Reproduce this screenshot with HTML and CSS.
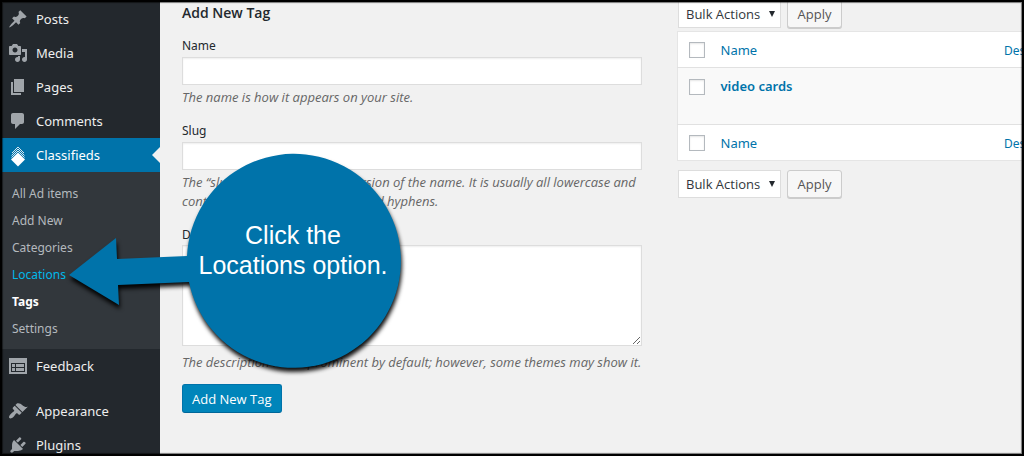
FILE: index.html
```html
<!DOCTYPE html>
<html lang="en">
<head>
<meta charset="utf-8">
<title>Tags</title>
<link rel="stylesheet" href="styles.css">
</head>
<body>
<div class="app">
  <nav class="sidebar" aria-label="Main menu">
    <ul class="menu">
      <li><a class="item" href="#"><svg class="icon" viewBox="0 0 20 20" aria-hidden="true"><path d="M10.44 3.02l1.82-1.82 6.36 6.35-1.83 1.82c-1.05-.68-2.48-.57-3.41.36l-.75.75c-.92.93-1.04 2.35-.35 3.41l-1.83 1.82-2.41-2.41-2.8 2.79c-.42.42-3.38 2.71-3.8 2.29s1.86-3.39 2.28-3.81l2.79-2.79L4.1 9.36l1.83-1.82c1.05.69 2.48.57 3.4-.36l.75-.75c.93-.92 1.05-2.35.36-3.41z"/></svg>Posts</a></li>
      <li><a class="item" href="#"><svg class="icon" viewBox="0 0 20 20" aria-hidden="true"><path d="M13 11V4c0-.55-.45-1-1-1h-1.67L9 1H5L3.67 3H2c-.55 0-1 .45-1 1v7c0 .55.45 1 1 1h10c.55 0 1-.45 1-1zM7 4.5c1.38 0 2.5 1.12 2.5 2.5S8.38 9.5 7 9.5 4.5 8.38 4.5 7 5.62 4.5 7 4.5zM14 6h5v10.5c0 1.38-1.12 2.5-2.5 2.5S14 17.88 14 16.5s1.12-2.5 2.5-2.5c.17 0 .34.02.5.05V9h-3V6zm-4 8.05V13h2v3.5c0 1.38-1.12 2.5-2.5 2.5S7 17.88 7 16.5 8.12 14 9.5 14c.17 0 .34.02.5.05z"/></svg>Media</a></li>
      <li><a class="item" href="#"><svg class="icon" viewBox="0 0 20 20" aria-hidden="true"><path d="M6 15V2h10v13H6zm-1 1h8v2H3V5h2v11z"/></svg>Pages</a></li>
      <li><a class="item" href="#"><svg class="icon" viewBox="0 0 20 20" aria-hidden="true"><path d="M5 2h9c1.1 0 2 .9 2 2v7c0 1.1-.9 2-2 2h-2l-5 5v-5H5c-1.1 0-2-.9-2-2V4c0-1.1.9-2 2-2z"/></svg>Comments</a></li>
      <li>
        <a class="item current" href="#"><svg class="icon" viewBox="0 0 20 20" aria-hidden="true"><path d="M10 7.500l7 7-7 7-7-7z"/><path class="outline" d="M3.500 12.500L10 6l6.500 6.500M3.500 10.500L10 4l6.500 6.500M4 8l6-6 6 6"/></svg>Classifieds</a>
        <ul class="submenu">
          <li><a href="#">All Ad items</a></li>
          <li><a href="#">Add New</a></li>
          <li><a href="#">Categories</a></li>
          <li><a class="hovered" href="#">Locations</a></li>
          <li><a class="active" href="#">Tags</a></li>
          <li><a href="#">Settings</a></li>
        </ul>
      </li>
      <li><a class="item" href="#"><svg class="icon" viewBox="0 0 20 20" aria-hidden="true"><path fill-rule="evenodd" d="M1 2h18v16H1zM3 7v9h14V7zM4 8h3v3H4zM8 8h8v3H8zM4 12h3v3H4zM8 12h8v3H8z"/></svg>Feedback</a></li>
      <li class="separated"><a class="item" href="#"><svg class="icon" viewBox="0 0 20 20" aria-hidden="true"><path d="M14.48 11.06L7.41 3.99l1.5-1.5c.5-.56 2.3-.47 3.51.32 1.21.8 1.43 1.28 2.91 2.1 1.18.64 2.45 1.26 4.45.85zm-.71.71L6.7 4.7 4.93 6.47c-.39.39-.39 1.02 0 1.41l1.06 1.06c.39.39.39 1.03 0 1.42-.6.6-1.43 1.11-2.21 1.69-.35.26-.7.53-1.01.84C1.43 14.23.4 16.08 1.4 17.07c.99 1 2.84-.03 4.18-1.36.31-.31.58-.66.85-1.02.57-.78 1.08-1.61 1.69-2.21.39-.39 1.02-.39 1.41 0l1.06 1.06c.39.39 1.02.39 1.41 0z"/></svg>Appearance</a></li>
      <li><a class="item" href="#"><svg class="icon" viewBox="0 0 20 20" aria-hidden="true"><path d="M13.11 4.36L9.87 7.6 8 5.73l3.24-3.24c.35-.34 1.05-.2 1.56.32.52.51.66 1.21.31 1.55zm-8 1.77l.91-1.12 9.01 9.01-1.19.84c-.71.71-2.63 1.16-3.82 1.16H6.14L4.9 17.26c-.59.59-1.54.59-2.12 0-.59-.58-.59-1.53 0-2.12l1.24-1.24v-3.88c0-1.13.4-3.19 1.09-3.89zm7.26 3.97l3.24-3.24c.34-.35 1.04-.21 1.55.31.52.51.66 1.21.31 1.55l-3.24 3.25z"/></svg>Plugins</a></li>
    </ul>
  </nav>

  <main class="content">
    <form class="tag-form">
      <h2 class="title">Add New Tag</h2>
      <div class="field">
        <label for="tag-name">Name</label>
        <input class="text" id="tag-name" type="text">
        <p>The name is how it appears on your site.</p>
      </div>
      <div class="field">
        <label for="tag-slug">Slug</label>
        <input class="text" id="tag-slug" type="text">
        <p>The “slug” is the URL-friendly version of the name. It is usually all lowercase and contains only letters, numbers, and hyphens.</p>
      </div>
      <div class="field">
        <label for="tag-description">Description</label>
        <textarea class="text area" id="tag-description"></textarea>
        <p>The description is not prominent by default; however, some themes may show it.</p>
      </div>
      <button class="primary" type="button">Add New Tag</button>
    </form>

    <section class="list">
      <div class="bulk">
        <span class="picker"><select aria-label="Bulk action, top"><option>Bulk Actions</option></select><svg class="caret" viewBox="0 0 6 6" aria-hidden="true"><path d="M0 0h6L3 6z"/></svg></span>
        <button class="secondary" type="button">Apply</button>
      </div>
      <table class="tags">
        <thead>
          <tr><td class="check"><input type="checkbox" aria-label="Select all"></td><th><a href="#">Name</a></th><th class="desc"><a href="#">Description</a></th></tr>
        </thead>
        <tbody>
          <tr><td class="check"><input type="checkbox" aria-label="Select video cards"></td><td><a class="row-title" href="#">video cards</a></td><td></td></tr>
        </tbody>
        <tfoot>
          <tr><td class="check"><input type="checkbox" aria-label="Select all, bottom"></td><th><a href="#">Name</a></th><th class="desc"><a href="#">Description</a></th></tr>
        </tfoot>
      </table>
      <div class="bulk">
        <span class="picker"><select aria-label="Bulk action, bottom"><option>Bulk Actions</option></select><svg class="caret" viewBox="0 0 6 6" aria-hidden="true"><path d="M0 0h6L3 6z"/></svg></span>
        <button class="secondary" type="button">Apply</button>
      </div>
    </section>
  </main>

  <aside class="callout">
    <svg class="bubble" viewBox="0 0 340 240" aria-hidden="true"><path d="M4 135L51 98l1 21 70-3a107 107 0 1 1 2 26l-71 3 1 20z"/></svg>
    <p class="callout-text">Click the<br>Locations option.</p>
  </aside>
  <div class="frame"></div>
</div>
</body>
</html>
```
FILE: styles.css
```css
* { box-sizing: border-box; }
body {
  margin: 0;
  background: #f1f1f1;
  color: #23282d;
  font: 13px/19px "Noto Sans", "Open Sans", sans-serif;
}
a { color: #0073aa; text-decoration: none; }
ul, p, h2 { margin: 0; padding: 0; }
ul { list-style: none; }
.app { position: relative; display: flex; height: 100vh; overflow: hidden; }

.sidebar { flex: 0 0 160px; padding-top: 2px; background: #23282d; }
.item {
  display: flex;
  align-items: center;
  gap: 8px;
  height: 34px;
  padding-left: 8px;
  color: #eee;
  font-size: 13px;
}
.icon { width: 20px; height: 20px; fill: #a0a5aa; overflow: visible; }
.current { position: relative; background: #0073aa; color: #fff; }
.current .icon { fill: #fff; }
.current::after {
  content: "";
  position: absolute;
  right: 0;
  border: 8px solid transparent;
  border-right-color: #f1f1f1;
}
.outline { fill: none; stroke: #d3e6f0; stroke-width: 1; }
.submenu { padding: 8px 0 7px 12px; background: #32373c; }
.submenu a { display: block; color: #b4b9be; font-size: 12px; line-height: 27px; }
.submenu .hovered { color: #00b9eb; }
.submenu .active { color: #fff; font-weight: 700; }
.separated { margin-top: 11px; }

.content {
  flex: 1;
  min-width: 0;
  display: grid;
  grid-template-columns: 460px minmax(0, 1fr);
  gap: 35px;
  padding-left: 22px;
}
.tag-form { padding-top: 3px; }
.title { font: 600 14px/19px "Open Sans", "Noto Sans", sans-serif; }
.field { margin-top: 14px; }
.field label { display: block; font-size: 12px; line-height: 19px; }
.field p {
  margin-top: 3px;
  color: #666;
  font: italic 13px/19px "Open Sans", "Noto Sans", sans-serif;
}
.text {
  display: block;
  width: 100%;
  height: 28px;
  margin: 2px 0 0;
  padding: 3px 5px;
  border: 1px solid #ddd;
  background: #fff;
  box-shadow: inset 0 1px 2px rgba(0, 0, 0, 0.07);
  font: inherit;
}
.area { height: 101px; margin-top: 1px; resize: vertical; }
.field .area + p { margin-top: 7px; }
.primary {
  height: 29px;
  margin-top: 12px;
  padding: 0 9px;
  border: 1px solid #0073aa;
  border-bottom-color: #006799;
  border-radius: 3px;
  background: #0085ba;
  color: #fff;
  font: 13px/26px "Open Sans", "Noto Sans", sans-serif;
}

.list { min-width: 0; overflow: hidden; }
.bulk { display: flex; gap: 6px; height: 28px; padding-left: 1px; }
.bulk:last-child { height: 29px; }
.picker { position: relative; width: 103px; }
.picker select {
  appearance: none;
  width: 100%;
  height: 28px;
  padding: 0 0 0 7px;
  border: 1px solid #ddd;
  border-radius: 0;
  background: #fff;
  color: #32373c;
  font: 13px/26px "Open Sans", "Noto Sans", sans-serif;
}
.caret { position: absolute; top: 11px; right: 6px; width: 6px; height: 6px; fill: #23282d; pointer-events: none; }
.secondary {
  height: 28px;
  width: 55px;
  padding: 0;
  border: 1px solid #ccc;
  border-radius: 3px;
  background: #f7f7f7;
  box-shadow: 0 1px 0 #ccc;
  color: #555;
  font: 13px/26px "Open Sans", "Noto Sans", sans-serif;
}
.tags {
  width: 100%;
  margin: 3px 0 9px;
  table-layout: fixed;
  border-collapse: collapse;
  border: 1px solid #e5e5e5;
  border-right: 0;
  background: #fff;
}
.tags th, .tags td { padding: 9px 0 7px 1px; text-align: left; font-weight: 400; line-height: 19px; vertical-align: top; }
.tags .check { width: 42px; padding: 10px 0 9px 11px; }
.tags tbody .check { padding-top: 11px; }
.tags .desc { width: 21px; white-space: nowrap; overflow: hidden; font-size: 12px; }
.tags tbody tr { height: 57px; background: #f9f9f9; border: 1px solid #e1e1e1; border-width: 1px 0; }
.row-title { font-weight: 600; }
.tags input {
  appearance: none;
  display: block;
  width: 16px;
  height: 16px;
  margin: 0;
  border: 1px solid #b4b9be;
  background: #fff;
  box-shadow: inset 0 1px 2px rgba(0, 0, 0, 0.1);
}

/* Callout floating over the page */
.callout { position: absolute; left: 65px; top: 140px; width: 340px; height: 240px; pointer-events: none; }
.bubble { display: block; width: 340px; height: 240px; overflow: visible; fill: #0073aa; filter: drop-shadow(1px 4px 2px rgba(0, 0, 0, 0.95)); }
.callout-text {
  position: absolute;
  top: 80px;
  left: 121px;
  width: 214px;
  color: #fff;
  font: 25px/30px "Liberation Sans", Arial, sans-serif;
  text-align: center;
  white-space: nowrap;
}
.frame {
  position: absolute;
  inset: 0;
  border: 2px solid #000;
  box-shadow: inset 0 0 1px 1px rgba(0, 0, 0, 0.5);
  pointer-events: none;
}
```
